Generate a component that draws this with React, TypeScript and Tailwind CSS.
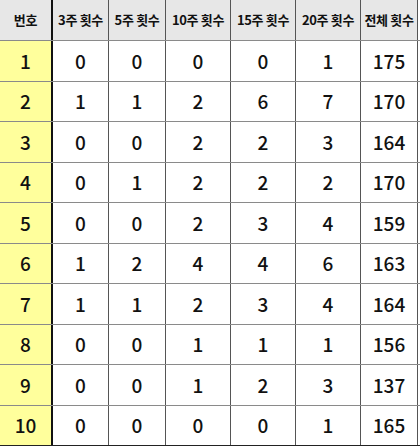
const headers = ["번호", "3주 횟수", "5주 횟수", "10주 횟수", "15주 횟수", "20주 횟수", "전체 횟수"]

const rows = [
  [1, 0, 0, 0, 0, 1, 175],
  [2, 1, 1, 2, 6, 7, 170],
  [3, 0, 0, 2, 2, 3, 164],
  [4, 0, 1, 2, 2, 2, 170],
  [5, 0, 0, 2, 3, 4, 159],
  [6, 1, 2, 4, 4, 6, 163],
  [7, 1, 1, 2, 3, 4, 164],
  [8, 0, 0, 1, 1, 1, 156],
  [9, 0, 0, 1, 2, 3, 137],
  [10, 0, 0, 0, 0, 1, 165],
]

const cols = "grid grid-cols-[53px_56px_57px_65px_65px_65px_57px]"

export default function App() {
  return (
    <div className="w-[420px] h-[446px] bg-white overflow-hidden" style={{ fontFamily: '"Noto Sans CJK KR", "Noto Sans", sans-serif' }}>
      {/* 헤더 */}
      <div className={`${cols} h-[41px] border-b border-[#8a8a8a]`}>
        {headers.map((h, i) => (
          <div
            key={h}
            className={`flex items-center justify-center bg-[#e7e7e7] text-[13px] font-semibold text-[#111] tracking-tight ${
              i === 0 ? "border-r-2 border-[#111]" : "border-r border-[#555]"
            }`}
          >
            {h}
          </div>
        ))}
      </div>

      {rows.map((r) => (
        <div key={r[0]} className={`${cols} h-[40.5px] border-b border-[#8a8a8a] last:border-[#222]`}>
          {r.map((v, i) => (
            <div
              key={i}
              className={`flex items-center justify-center text-[19px] font-medium text-[#111] ${
                i === 0 ? "bg-[#ffff9c] border-r-2 border-[#111]" : "bg-white border-r border-[#555]"
              }`}
            >
              {v}
            </div>
          ))}
        </div>
      ))}
    </div>
  )
}
